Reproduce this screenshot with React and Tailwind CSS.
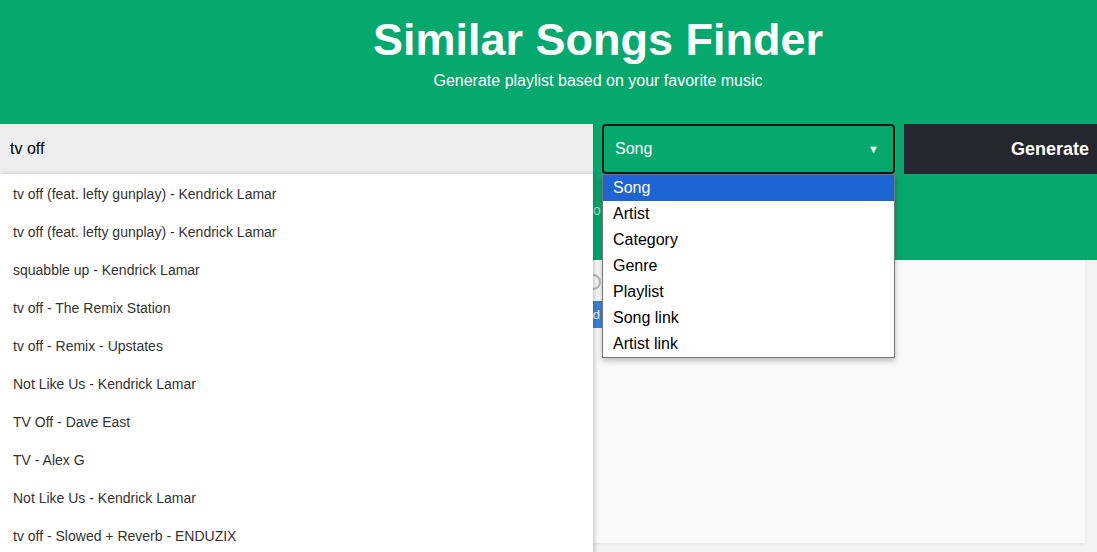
import React from 'react';

const suggestions = [
  'tv off (feat. lefty gunplay) - Kendrick Lamar',
  'tv off (feat. lefty gunplay) - Kendrick Lamar',
  'squabble up - Kendrick Lamar',
  'tv off - The Remix Station',
  'tv off - Remix - Upstates',
  'Not Like Us - Kendrick Lamar',
  'TV Off - Dave East',
  'TV - Alex G',
  'Not Like Us - Kendrick Lamar',
  'tv off - Slowed + Reverb - ENDUZIX',
];

const options = ['Song', 'Artist', 'Category', 'Genre', 'Playlist', 'Song link', 'Artist link'];

const App = () => {
  return (
    <div className="relative w-[1097px] h-[552px] overflow-hidden font-['Liberation_Sans',Arial,sans-serif] bg-white">
      <div className="w-[1196px]">
        <div className="bg-[#05a96e] text-white text-center h-[124px] pt-[14px]">
          <h1 className="text-[45px] font-bold leading-[52px]">Similar Songs Finder</h1>
          <p className="text-[16px] mt-[3px]">Generate playlist based on your favorite music</p>
        </div>

        <div className="bg-[#05a96e] h-[136px]">
          <div className="flex items-stretch h-[50px] gap-[9px]">
            <div className="w-[593px] shrink-0 bg-[#ededed] flex items-center pl-[10px] text-[16px] text-black shadow-[0_2px_3px_rgba(0,0,0,0.15)]">
              tv off
            </div>
            <div className="w-[293px] shrink-0 rounded-[4px] border-2 border-[#161616] flex items-center justify-between px-[11px] text-white text-[16px]">
              <span>Song</span>
              <span className="text-[11px] mr-[3px]">▼</span>
            </div>
            <button className="w-[292px] shrink-0 bg-[#25262e] text-white font-bold text-[18px]">
              Generate
            </button>
          </div>
          <div className="pl-[593px] pt-[26px] text-[#9be3c4] text-[14px]">o</div>
        </div>

        <div className="bg-[#f3f3f3] w-[1097px] h-[292px] pr-[12px] pb-[9px]">
          <div className="h-full bg-[#fafafa] border-l-[3px] border-[#d8d8d8] ml-[100px] shadow-[0_1px_3px_rgba(0,0,0,0.06)] pt-[14px] pl-[480px]">
            <div className="flex items-center">
              <div className="w-[16px] h-[16px] rounded-full border-2 border-[#bbbbbb] ml-[2px]"></div>
            </div>
            <div className="mt-[11px] w-[20px] h-[27px] bg-[#3b82e0] text-white text-[13px] flex items-center justify-end pr-[3px]">d</div>
          </div>
        </div>
      </div>

      <ul className="absolute left-0 top-[174px] w-[593px] h-[390px] pt-[1px] bg-white shadow-[2px_0_4px_rgba(0,0,0,0.18)] text-[14px] text-[#333333]">
        {suggestions.map((s, i) => (
          <li key={i} className="h-[38px] flex items-center pl-[13px]">{s}</li>
        ))}
      </ul>

      <ul className="absolute left-[602px] top-[174px] w-[293px] bg-white border border-[#767676] shadow-[0_3px_6px_rgba(0,0,0,0.25)] text-[16px] text-black">
        {options.map((o, i) => (
          <li
            key={o}
            className={i === 0 ? 'h-[26px] flex items-center pl-[10px] bg-[#1f64d4] text-white' : 'h-[26px] flex items-center pl-[10px]'}
          >
            {o}
          </li>
        ))}
      </ul>
    </div>
  );
};

export default App;
